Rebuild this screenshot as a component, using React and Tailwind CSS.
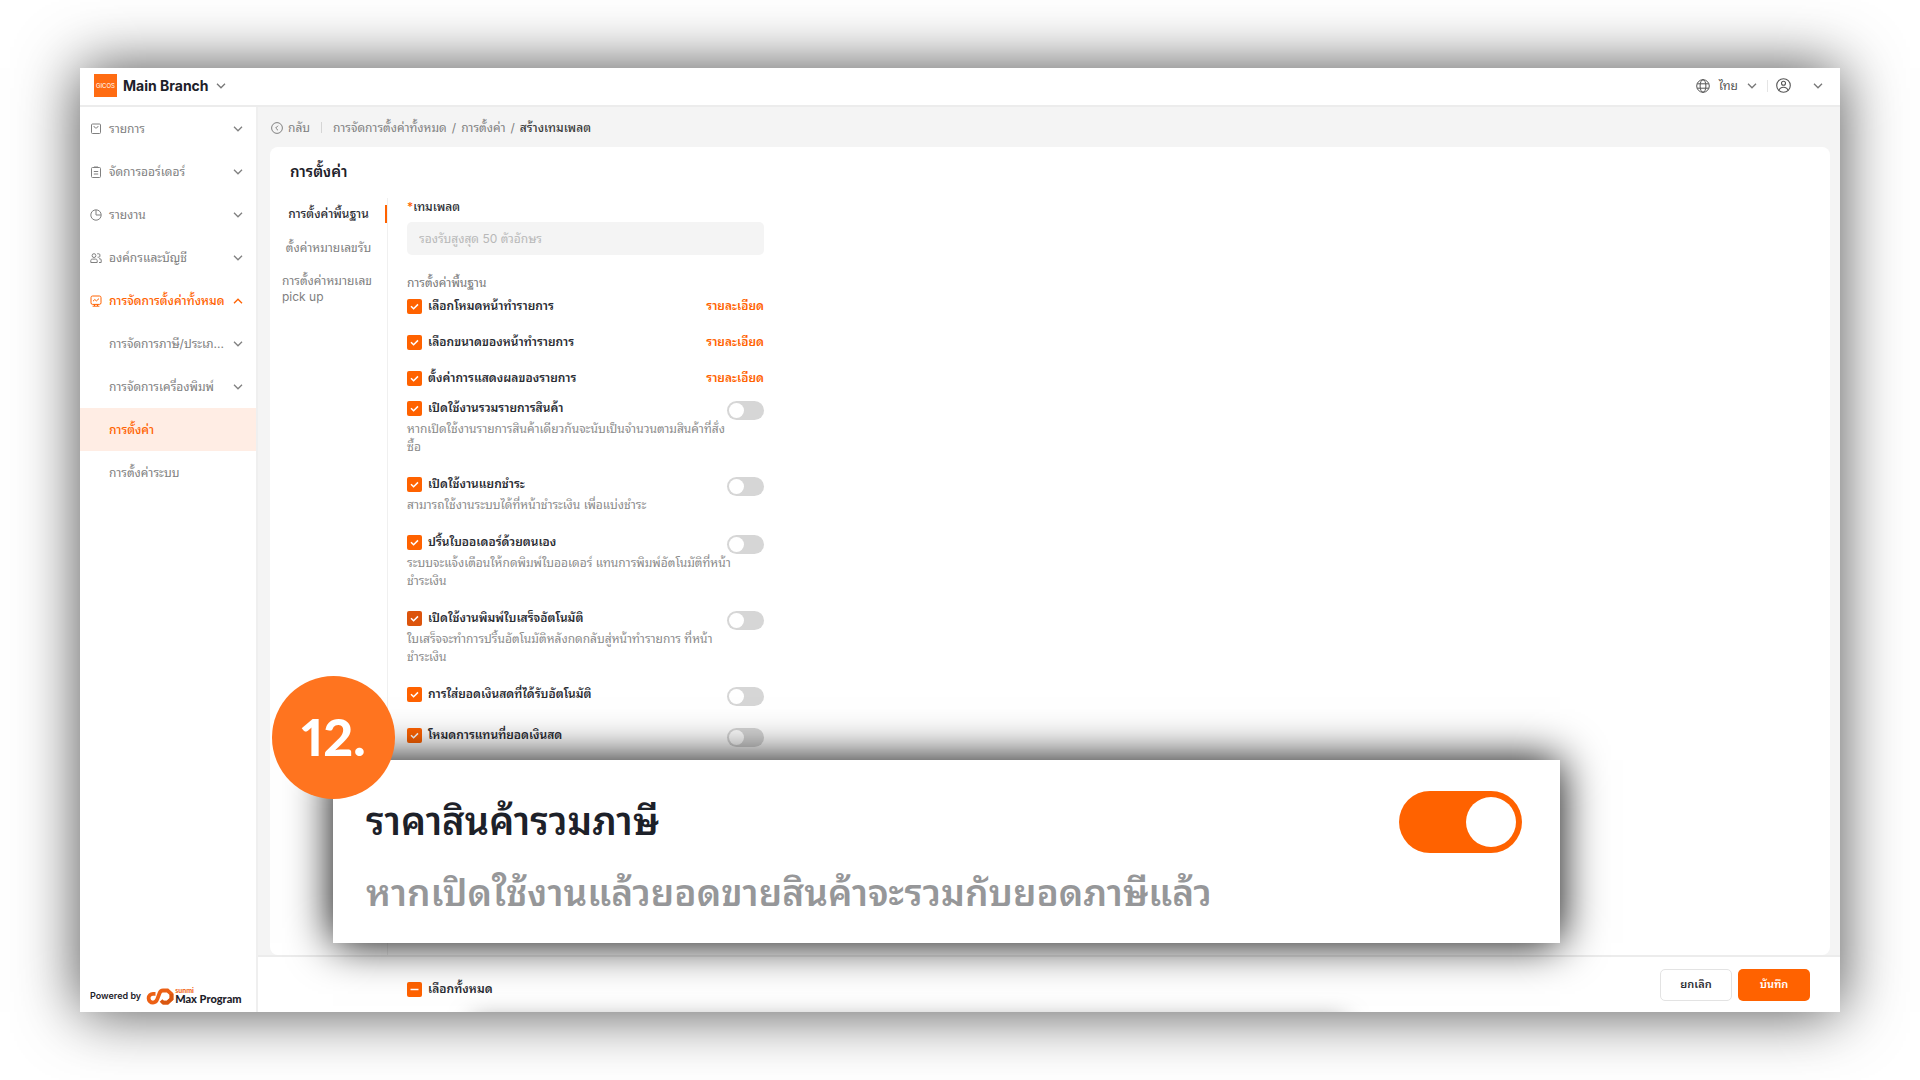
import { useState } from "react";

const MENU = [
  { label: "รายการ", icon: "bag" },
  { label: "จัดการออร์เดอร์", icon: "clipboard" },
  { label: "รายงาน", icon: "clock" },
  { label: "องค์กรและบัญชี", icon: "people" },
  { label: "การจัดการตั้งค่าทั้งหมด", icon: "monitor", open: true },
];

const SUBMENU = [
  { label: "การจัดการภาษี/ประเภ...", expandable: true },
  { label: "การจัดการเครื่องพิมพ์", expandable: true },
  { label: "การตั้งค่า", active: true },
  { label: "การตั้งค่าระบบ" },
];

const DETAIL_OPTIONS = [
  "เลือกโหมดหน้าทำรายการ",
  "เลือกขนาดของหน้าทำรายการ",
  "ตั้งค่าการแสดงผลของรายการ",
];

const SWITCH_OPTIONS = [
  {
    label: "เปิดใช้งานรวมรายการสินค้า",
    lines: ["หากเปิดใช้งานรายการสินค้าเดียวกันจะนับเป็นจำนวนตามสินค้าที่สั่ง", "ซื้อ"],
  },
  {
    label: "เปิดใช้งานแยกชำระ",
    lines: ["สามารถใช้งานระบบได้ที่หน้าชำระเงิน เพื่อแบ่งชำระ"],
  },
  {
    label: "ปริ้นใบออเดอร์ด้วยตนเอง",
    lines: ["ระบบจะแจ้งเตือนให้กดพิมพ์ใบออเดอร์ แทนการพิมพ์อัตโนมัติที่หน้า", "ชำระเงิน"],
  },
  {
    label: "เปิดใช้งานพิมพ์ใบเสร็จอัตโนมัติ",
    lines: ["ใบเสร็จจะทำการปริ้นอัตโนมัติหลังกดกลับสู่หน้าทำรายการ ที่หน้า", "ชำระเงิน"],
    dark: true,
  },
  { label: "การใส่ยอดเงินสดที่ได้รับอัตโนมัติ", lines: [] },
  { label: "โหมดการแทนที่ยอดเงินสด", lines: [] },
];

function Chevron({ up, className }) {
  return (
    <svg
      viewBox="0 0 10 6"
      className={`h-[6px] w-[10px] shrink-0 ${className}`}
      fill="none"
      stroke="currentColor"
      strokeWidth="1.3"
      aria-hidden="true"
    >
      <path d={up ? "M1 5.2 5 1.2l4 4" : "M1 .8l4 4 4-4"} />
    </svg>
  );
}

function MenuIcon({ name }) {
  return (
    <svg
      viewBox="0 0 12 12"
      className="size-3 shrink-0"
      fill="none"
      stroke="currentColor"
      strokeWidth="1"
      aria-hidden="true"
    >
      {name === "bag" && (
        <>
          <rect x="1.5" y="1" width="9" height="9.5" rx="1" />
          <path d="M4 3c0 2.6 4 2.6 4 0" />
        </>
      )}
      {name === "clipboard" && (
        <>
          <rect x="1.5" y="1.5" width="9" height="10" rx="1" />
          <path d="M4 1h4M3.8 5.5h4.4M3.8 8h4.4" />
        </>
      )}
      {name === "clock" && (
        <>
          <circle cx="6" cy="6" r="5.2" />
          <path d="M6 1v5h5" />
        </>
      )}
      {name === "people" && (
        <>
          <circle cx="4" cy="3.6" r="1.9" />
          <path d="M.8 10.5V8.6c0-.9.6-1.5 1.5-1.5h3.4c.9 0 1.5.6 1.5 1.5v1.9zM7.2 1.8h1.6c.7 0 1.1.4 1.1 1v1.4c0 .6-.4 1-1.1 1H7.6M9 6.8h1c.8 0 1.2.5 1.2 1.2v2.5H9" />
        </>
      )}
      {name === "monitor" && (
        <>
          <rect x="1" y="1" width="10" height="8.4" rx="1.6" />
          <path d="M3 6.2l1.8-1.7 1.6 1.4L9 3.6M2.6 11.2h6.8M4.5 9.5v1.5M7.5 9.5v1.5" />
        </>
      )}
    </svg>
  );
}

function Checkbox({ label, dark, minus }) {
  const [checked, setChecked] = useState(true);
  return (
    <label className="flex items-center gap-[6px] text-[12px] leading-[18px] font-semibold text-[#2b2d33]">
      <span className="grid shrink-0">
        <input
          type="checkbox"
          checked={checked}
          onChange={(e) => setChecked(e.target.checked)}
          className={`col-start-1 row-start-1 size-[15px] appearance-none rounded-[2px] border border-[#ccc] checked:border-transparent ${
            dark ? "checked:bg-[#dc540c]" : "checked:bg-[#ff6200]"
          }`}
        />
        <svg
          viewBox="0 0 15 15"
          className="pointer-events-none col-start-1 row-start-1 size-[15px]"
          fill="none"
          stroke="#fff"
          strokeWidth="1.5"
          aria-hidden="true"
        >
          <path d={minus ? "M3.5 7.5h8" : "M4 7.2l2.6 2.6L11 5.4"} />
        </svg>
      </span>
      {label}
    </label>
  );
}

function Toggle({ label }) {
  const [on, setOn] = useState(false);
  return (
    <input
      type="checkbox"
      role="switch"
      aria-label={label}
      checked={on}
      onChange={(e) => setOn(e.target.checked)}
      className="mt-[2px] h-[19px] w-[37px] shrink-0 appearance-none rounded-full bg-[#d6d6d6] p-[2px] before:block before:size-[15px] before:rounded-full before:bg-white checked:bg-[#ff6200] checked:before:ml-auto"
    />
  );
}

function Header() {
  return (
    <header className="flex h-[39px] items-center border-b-2 border-[#ececec] bg-white pr-[17px] pb-[2px] pl-[14px]">
      <div className="grid size-[23px] place-items-center bg-[#ff6c12] text-[6px] leading-none text-white">
        GICOS
      </div>
      <button className="ml-[6px] flex items-center gap-[7px] text-[14px] leading-5 font-bold text-[#1d2129]">
        Main Branch
        <Chevron className="text-[#777]" />
      </button>
      <div className="ml-auto flex items-center text-[#555]">
        <svg viewBox="0 0 14 14" className="size-[14px]" fill="none" stroke="currentColor" aria-hidden="true">
          <circle cx="7" cy="7" r="6.3" />
          <ellipse cx="7" cy="7" rx="2.9" ry="6.3" />
          <path d="M1.2 4.8h11.6M1.2 9.2h11.6" />
        </svg>
        <button className="ml-[9px] flex items-center gap-[9px] text-[12px] leading-5">
          ไทย
          <Chevron className="text-[#777]" />
        </button>
        <div className="ml-[10px] h-3 w-px bg-[#e5e5e5]" />
        <button className="ml-2 flex items-center gap-[22px]" aria-label="บัญชี">
          <svg viewBox="0 0 15 15" className="size-[15px]" fill="none" stroke="currentColor" strokeWidth="1.1" aria-hidden="true">
            <circle cx="7.5" cy="7.5" r="6.8" />
            <circle cx="7.5" cy="5.3" r="2" />
            <path d="M3 12.4c.6-2.2 2.2-3.2 4.5-3.2s3.9 1 4.5 3.2" />
          </svg>
          <Chevron className="text-[#777]" />
        </button>
      </div>
    </header>
  );
}

function Sidebar() {
  return (
    <aside className="flex w-[178px] shrink-0 flex-col border-r-2 border-[#efefef] bg-white text-[12px] leading-[18px] text-[#808080]">
      <nav>
        {MENU.map((item) => (
          <button
            key={item.label}
            className={`flex h-[43px] w-full items-center pr-[13px] pl-[10px] ${
              item.open ? "font-medium text-[#ff6200]" : ""
            }`}
          >
            <MenuIcon name={item.icon} />
            <span className="ml-[7px]">{item.label}</span>
            <Chevron up={item.open} className="ml-auto" />
          </button>
        ))}
        {SUBMENU.map((item) => (
          <a
            key={item.label}
            href="#"
            className={`flex h-[43px] items-center pr-[13px] pl-[29px] ${
              item.active ? "bg-[#ffede4] font-medium text-[#ff6200]" : ""
            }`}
          >
            {item.label}
            {item.expandable && <Chevron className="ml-auto" />}
          </a>
        ))}
      </nav>

      <div className="mt-auto flex items-center pb-[7px] pl-[10px] text-[#1d2129]">
        <span className="text-[9px] leading-3 font-semibold">Powered by</span>
        <svg viewBox="0 0 28 17" className="ml-[5px] h-[17px] w-7" fill="none" strokeWidth="3.8" aria-hidden="true">
          <path
            d="M17 14.6h4.5l4-3.6V6l-4-3.5H17c-1.8 0-2.8.9-3.5 2.7l-2.2 6c-.8 2.2-1.9 3.400-4.300 3.400a4.400 4.400 0 0 1 0-8.800h2.500"
            stroke="#ec6014"
          />
          <path d="M15 12.5 17.2 14.6h4.3l4-3.6V6" stroke="#d95710" />
        </svg>
        <div className="ml-px font-['Lato',sans-serif] font-black">
          <p className="text-[7px] leading-[6px] text-[#f26a1b]">sunmi</p>
          <p className="text-[11px] leading-[12px]">Max Program</p>
        </div>
      </div>
    </aside>
  );
}

function Breadcrumb() {
  return (
    <div className="flex h-10 items-center pt-px pl-[13px] text-[12px] leading-[18px] text-[#808080]">
      <button className="flex items-center gap-[5px]">
        <svg viewBox="0 0 12 12" className="size-3" fill="none" stroke="currentColor" aria-hidden="true">
          <circle cx="6" cy="6" r="5.4" />
          <path d="M7 3.7 4.7 6 7 8.3" />
        </svg>
        กลับ
      </button>
      <div className="mx-[11px] h-[11px] w-px bg-[#d5d5d5]" />
      <nav className="flex gap-[5px]">
        <a href="#">การจัดการตั้งค่าทั้งหมด</a>
        <span>/</span>
        <a href="#">การตั้งค่า</a>
        <span>/</span>
        <span className="font-medium text-[#3a3a3a]">สร้างเทมเพลต</span>
      </nav>
    </div>
  );
}

function SettingsForm() {
  return (
    <form className="w-[357px] text-[12px] leading-[18px]">
      <label htmlFor="template" className="block font-medium text-[#2b2d33]">
        <span className="text-[#ff6200]">*</span>เทมเพลต
      </label>
      <input
        id="template"
        type="text"
        placeholder="รองรับสูงสุด 50 ตัวอักษร"
        className="mt-[6px] h-[33px] w-full rounded-[5px] bg-[#f4f4f4] px-3 placeholder:text-[#b8b8b8]"
      />

      <p className="mt-[19px] mb-[5px] text-[#777]">การตั้งค่าพื้นฐาน</p>
      <div className="flex flex-col gap-[18px]">
        {DETAIL_OPTIONS.map((label) => (
          <div key={label} className="flex items-start justify-between">
            <Checkbox label={label} />
            <a href="#" className="leading-[18px] font-semibold text-[#ff6200]">
              รายละเอียด
            </a>
          </div>
        ))}
      </div>

      <div className="mt-3 flex flex-col gap-[19px]">
        {SWITCH_OPTIONS.map((opt) => (
          <div key={opt.label} className="flex min-h-[22px] items-start justify-between">
            <div className="min-w-0 flex-1">
              <Checkbox label={opt.label} dark={opt.dark} />
              {opt.lines.length > 0 && (
                <p className="mt-[3px] text-[#8a8a8a]">
                  {opt.lines.map((line) => (
                    <span key={line} className="block whitespace-nowrap">
                      {line}
                    </span>
                  ))}
                </p>
              )}
            </div>
            <Toggle label={opt.label} />
          </div>
        ))}
      </div>
    </form>
  );
}

// Enlarged option with its step number, floating over the settings page.
function Callout() {
  const [on, setOn] = useState(true);
  return (
    <div className="absolute right-[280px] bottom-[69px] left-[253px] bg-white shadow-[0_0_42px_#000]">
      <div className="absolute -top-[84px] -left-[61px] grid size-[123px] place-items-center rounded-full bg-[#ff741f] pb-1 font-['Lato',sans-serif] text-[52px] leading-none font-black text-white proportional-nums">
        12.
      </div>
      <div className="flex h-[183px] items-start justify-between pt-[31px] pr-[38px] pl-[33px] font-semibold">
        <div>
          <label htmlFor="tax" className="block text-[38px] leading-[60px] text-[#1d2129]">
            ราคาสินค้ารวมภาษี
          </label>
          <p className="mt-3 text-[37px] leading-[60px] text-[#969799]">
            หากเปิดใช้งานแล้วยอดขายสินค้าจะรวมกับยอดภาษีแล้ว
          </p>
        </div>
        <input
          id="tax"
          type="checkbox"
          role="switch"
          checked={on}
          onChange={(e) => setOn(e.target.checked)}
          className="h-[62px] w-[123px] shrink-0 appearance-none rounded-full bg-[#d6d6d6] p-[6px] before:block before:size-[50px] before:rounded-full before:bg-white checked:bg-[#ff6200] checked:before:ml-auto"
        />
      </div>
    </div>
  );
}

export default function App() {
  return (
    <div className="flex min-h-screen bg-white px-20 py-[68px] font-['Inter','Noto_Sans_Thai_Looped','Loma','Noto_Sans_Thai',sans-serif]">
      <div className="relative flex flex-1 flex-col bg-white shadow-[0_0_58px_rgba(0,0,0,0.7)]">
        <Header />
        <div className="flex flex-1">
          <Sidebar />
          <div className="flex flex-1 flex-col bg-[#f4f4f4]">
            <Breadcrumb />
            <main className="mr-[10px] ml-3 flex flex-1 flex-col rounded-lg bg-white">
              <h1 className="mt-3 pl-5 text-[15px] leading-[26px] font-semibold text-[#1d2129]">
                การตั้งค่า
              </h1>
              <div className="mt-[13px] flex flex-1">
                <nav className="flex w-[118px] shrink-0 flex-col border-r border-[#f0f0f0] text-[12px] text-[#808080]">
                  <a
                    href="#"
                    className="mt-[7px] flex h-[18px] items-center justify-center border-r-2 border-[#ff6200] pl-[2px] font-medium text-[#2b2d33]"
                  >
                    การตั้งค่าพื้นฐาน
                  </a>
                  <a href="#" className="mt-4 text-center leading-[18px]">
                    ตั้งค่าหมายเลขรับ
                  </a>
                  <a href="#" className="mt-4 pl-3 leading-4">
                    การตั้งค่าหมายเลข
                    <br />
                    pick up
                  </a>
                </nav>
                <div className="pl-[19px]">
                  <SettingsForm />
                </div>
              </div>
            </main>
            <footer className="relative flex h-[57px] items-center overflow-hidden border-t-2 border-[#ececec] bg-white pr-[30px] pl-[149px]">
              <div className="absolute top-[64px] right-[495px] left-[215px] h-5 shadow-[0_0_24px_rgba(0,0,0,0.5)]" />
              <div className="pt-[9px]">
                <Checkbox label="เลือกทั้งหมด" minus />
              </div>
              <div className="ml-auto flex gap-[6px] text-[11px] font-semibold">
                <button className="h-8 w-[72px] rounded-[5px] border border-[#e3e3e3] text-[#2b2d33]">
                  ยกเลิก
                </button>
                <button className="h-8 w-[72px] rounded-[5px] bg-[#ff6200] text-white">บันทึก</button>
              </div>
            </footer>
          </div>
        </div>
        <Callout />
      </div>
    </div>
  );
}
